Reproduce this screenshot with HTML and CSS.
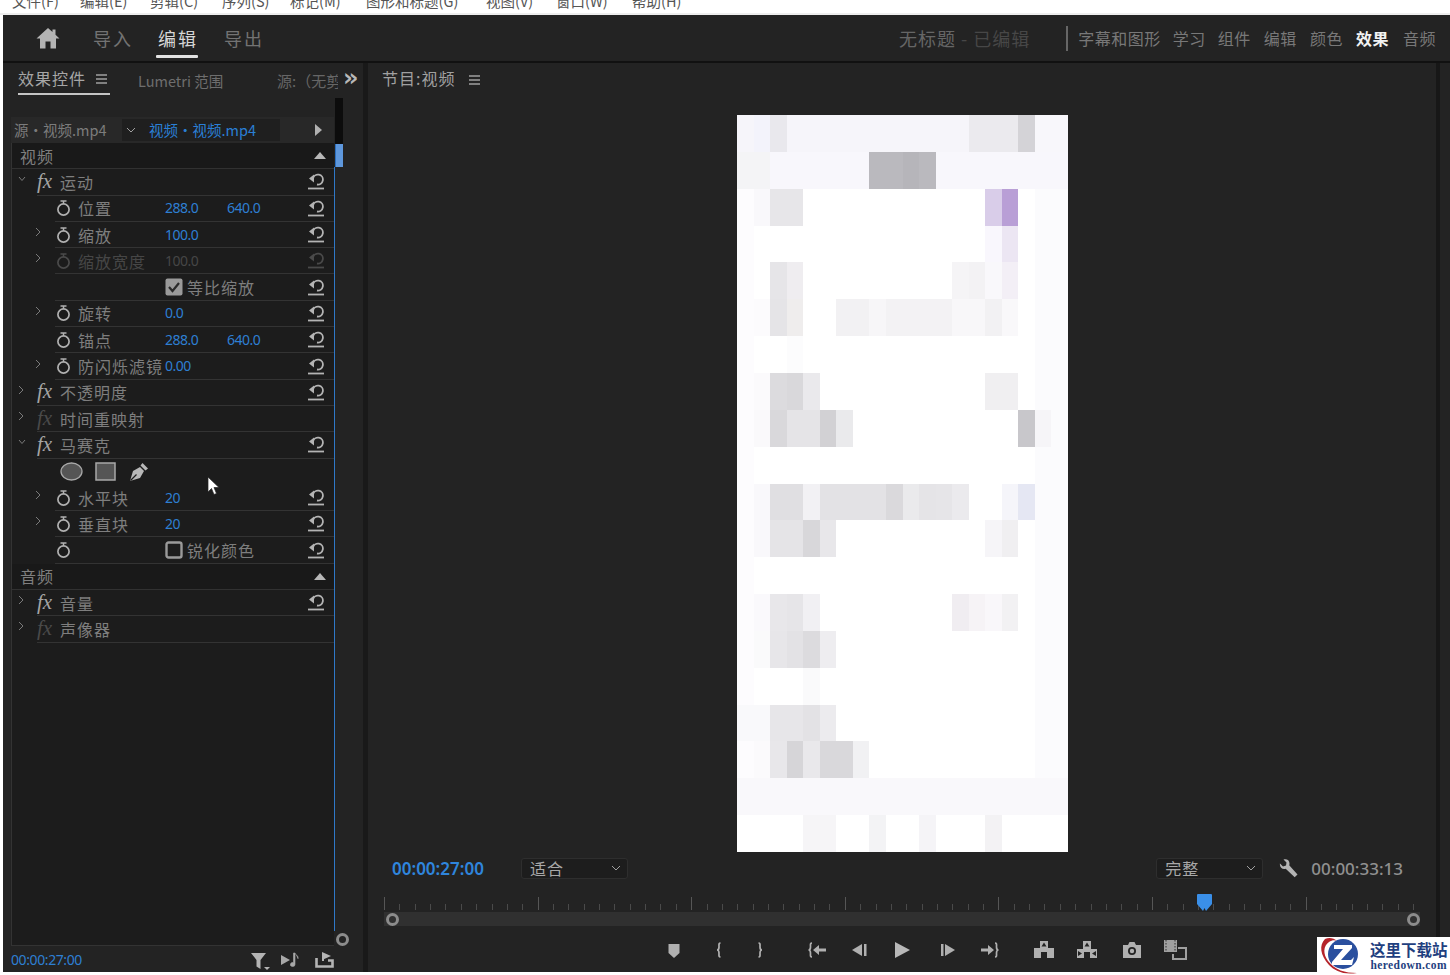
FILE: index.html
```html
<!DOCTYPE html>
<html lang="zh">
<head>
<meta charset="utf-8">
<title>Premiere Pro</title>
<link rel="stylesheet" href="styles.css">
</head>
<body>
<nav class="menubar">
  <span class="m m1">文件(F)</span><span class="m m2">编辑(E)</span><span class="m m3">剪辑(C)</span><span class="m m4">序列(S)</span><span class="m m5">标记(M)</span><span class="m m6">图形和标题(G)</span><span class="m m7">视图(V)</span><span class="m m8">窗口(W)</span><span class="m m9">帮助(H)</span>
</nav>
<div class="app">
  <header class="topbar">
    <svg class="home" viewBox="0 0 24 22"><path d="M12 1 0.5 11.5H4V21.500h5.500V14.500h5V21.500H20V11.500h3.500L19.500 7.800V2.500h-3v2.500z"/></svg>
    <span class="mode mode-import">导入</span>
    <span class="mode mode-active">编辑</span>
    <span class="mode mode-export">导出</span>
    <span class="doc">无标题<em> - 已编辑</em></span>
    <span class="divider"></span>
    <span class="ws ws1">字幕和图形</span><span class="ws ws2">学习</span><span class="ws ws3">组件</span><span class="ws ws4">编辑</span><span class="ws ws5">颜色</span><span class="ws ws6 ws-on">效果</span><span class="ws ws7">音频</span>
  </header>
  <main class="work">
    <section class="left">
      <div class="tabs">
        <div class="tab-active"><span>效果控件</span><svg class="burger" viewBox="0 0 11 10"><path d="M0 1h11M0 5h11M0 9h11"/></svg></div>
        <span class="tab-lum">Lumetri 范围</span>
        <span class="tab-src">源:（无剪辑）</span>
        <span class="more">»</span>
      </div>
      <div class="lbody">
        <div class="lmain">
          <div class="srcbar">
            <span class="src-a">源・视频.mp4</span>
            <div class="src-b">
              <svg class="chev-s" viewBox="0 0 10 6"><path d="M1 1l4 4 4-4"/></svg>
              <span class="src-blue">视频・视频.mp4</span>
            </div>
            <svg class="src-tri" viewBox="0 0 7 12"><path d="M0 0l7 6-7 6z"/></svg>
          </div>
          <div class="list">
            <div class="sec"><span>视频</span><svg class="up" viewBox="0 0 12 7"><path d="M6 0l6 7H0z"/></svg></div>

            <div class="row"><span class="c-fx"><svg class="chev" viewBox="0 0 8 6"><use href="#i-down"/></svg></span><div class="in"><span class="fx">fx</span><span class="name">运动</span><svg class="reset" viewBox="0 0 16 17"><use href="#i-reset"/></svg></div></div>

            <div class="row"><span class="c-pr"></span><div class="in"><svg class="watch" viewBox="0 0 15 16"><use href="#i-watch"/></svg><span class="lab">位置</span><span class="v">288.0</span><span class="v">640.0</span><svg class="reset" viewBox="0 0 16 17"><use href="#i-reset"/></svg></div></div>

            <div class="row"><span class="c-pr"><svg class="chev-r" viewBox="0 0 6 10"><use href="#i-right"/></svg></span><div class="in"><svg class="watch" viewBox="0 0 15 16"><use href="#i-watch"/></svg><span class="lab">缩放</span><span class="v">100.0</span><svg class="reset" viewBox="0 0 16 17"><use href="#i-reset"/></svg></div></div>

            <div class="row off"><span class="c-pr"><svg class="chev-r" viewBox="0 0 6 10"><use href="#i-right"/></svg></span><div class="in"><svg class="watch" viewBox="0 0 15 16"><use href="#i-watch"/></svg><span class="lab">缩放宽度</span><span class="v">100.0</span><svg class="reset" viewBox="0 0 16 17"><use href="#i-reset"/></svg></div></div>

            <div class="row"><span class="c-pr"></span><div class="in"><span class="nowatch"></span><span class="lab"></span><svg class="check" viewBox="0 0 18 18"><rect x="0.500" y="0.500" width="17" height="17" rx="2" fill="#9a9a9a"/><path d="M4 9l3.500 4L14 5" fill="none" stroke="#2a2a2a" stroke-width="2.200"/></svg><span class="ck-lab">等比缩放</span><svg class="reset" viewBox="0 0 16 17"><use href="#i-reset"/></svg></div></div>

            <div class="row"><span class="c-pr"><svg class="chev-r" viewBox="0 0 6 10"><use href="#i-right"/></svg></span><div class="in"><svg class="watch" viewBox="0 0 15 16"><use href="#i-watch"/></svg><span class="lab">旋转</span><span class="v">0.0</span><svg class="reset" viewBox="0 0 16 17"><use href="#i-reset"/></svg></div></div>

            <div class="row"><span class="c-pr"></span><div class="in"><svg class="watch" viewBox="0 0 15 16"><use href="#i-watch"/></svg><span class="lab">锚点</span><span class="v">288.0</span><span class="v">640.0</span><svg class="reset" viewBox="0 0 16 17"><use href="#i-reset"/></svg></div></div>

            <div class="row"><span class="c-pr"><svg class="chev-r" viewBox="0 0 6 10"><use href="#i-right"/></svg></span><div class="in"><svg class="watch" viewBox="0 0 15 16"><use href="#i-watch"/></svg><span class="lab">防闪烁滤镜</span><span class="v">0.00</span><svg class="reset" viewBox="0 0 16 17"><use href="#i-reset"/></svg></div></div>

            <div class="row"><span class="c-fx"><svg class="chev-r" viewBox="0 0 6 10"><use href="#i-right"/></svg></span><div class="in"><span class="fx">fx</span><span class="name">不透明度</span><svg class="reset" viewBox="0 0 16 17"><use href="#i-reset"/></svg></div></div>

            <div class="row"><span class="c-fx"><svg class="chev-r" viewBox="0 0 6 10"><use href="#i-right"/></svg></span><div class="in"><span class="fx fx-off">fx</span><span class="name">时间重映射</span></div></div>

            <div class="row"><span class="c-fx"><svg class="chev" viewBox="0 0 8 6"><use href="#i-down"/></svg></span><div class="in"><span class="fx">fx</span><span class="name">马赛克</span><svg class="reset" viewBox="0 0 16 17"><use href="#i-reset"/></svg></div></div>

            <div class="row"><span class="c-pr"></span><div class="in in-plain">
              <svg class="tool tool-e" viewBox="0 0 23 19"><ellipse cx="11.500" cy="9.500" rx="10.500" ry="8.500" fill="#555" stroke="#a8a8a8" stroke-width="1.300"/></svg>
              <svg class="tool tool-r" viewBox="0 0 21 19"><rect x="1" y="1" width="19" height="17" fill="#555" stroke="#a8a8a8" stroke-width="1.500"/></svg>
              <svg class="tool tool-p" viewBox="0 0 20 20"><path d="M1 19 4 9l7-4 4 4-4 7zM11.500 3.500l2-2.500 5.500 5.500-2.500 2z" fill="#b8b8b8"/><path d="M1.500 18.500 7.500 12.500" stroke="#1d1d1d" stroke-width="1.200"/></svg>
            </div></div>

            <div class="row"><span class="c-pr"><svg class="chev-r" viewBox="0 0 6 10"><use href="#i-right"/></svg></span><div class="in"><svg class="watch" viewBox="0 0 15 16"><use href="#i-watch"/></svg><span class="lab">水平块</span><span class="v">20</span><svg class="reset" viewBox="0 0 16 17"><use href="#i-reset"/></svg></div></div>

            <div class="row"><span class="c-pr"><svg class="chev-r" viewBox="0 0 6 10"><use href="#i-right"/></svg></span><div class="in"><svg class="watch" viewBox="0 0 15 16"><use href="#i-watch"/></svg><span class="lab">垂直块</span><span class="v">20</span><svg class="reset" viewBox="0 0 16 17"><use href="#i-reset"/></svg></div></div>

            <div class="row"><span class="c-pr"></span><div class="in"><svg class="watch" viewBox="0 0 15 16"><use href="#i-watch"/></svg><span class="lab"></span><svg class="check" viewBox="0 0 18 18"><rect x="1.500" y="1.500" width="15" height="15" rx="2" fill="none" stroke="#9a9a9a" stroke-width="2.400"/></svg><span class="ck-lab">锐化颜色</span><svg class="reset" viewBox="0 0 16 17"><use href="#i-reset"/></svg></div></div>

            <div class="sec"><span>音频</span><svg class="up" viewBox="0 0 12 7"><path d="M6 0l6 7H0z"/></svg></div>

            <div class="row"><span class="c-fx"><svg class="chev-r" viewBox="0 0 6 10"><use href="#i-right"/></svg></span><div class="in"><span class="fx">fx</span><span class="name">音量</span><svg class="reset" viewBox="0 0 16 17"><use href="#i-reset"/></svg></div></div>

            <div class="row"><span class="c-fx"><svg class="chev-r" viewBox="0 0 6 10"><use href="#i-right"/></svg></span><div class="in"><span class="fx fx-off">fx</span><span class="name">声像器</span></div></div>
          </div>
        </div>
        <div class="scroll">
          <span class="sb-black"></span>
          <span class="sb-thumb"></span>
          <span class="sb-line"></span>
          <span class="ring"></span>
        </div>
        <svg class="cursor" viewBox="0 0 13 20"><path d="M1 1v15l3.500-3.500 2.500 6 2.500-1-2.500-6h5z" fill="#fff" stroke="#222" stroke-width="0.700"/></svg>
      </div>
      <footer class="lfoot">
        <span class="lfoot-tc">00:00:27:00</span>
        <svg class="ic-filter" viewBox="0 0 19 19"><path d="M0 1h15L9.500 8v9l-4-2.500V8z" fill="#b4b4b4"/><path d="M13 15h6l-3 3z" fill="#b4b4b4"/></svg>
        <svg class="ic-audio" viewBox="0 0 20 16"><path d="M0 3l9 5-9 5z" fill="#a8a8a8"/><path d="M14 1v11.500a2.300 2 0 1 1-1.500-1.900V1h1.500c.5 2 4 3 3 6" fill="#a8a8a8" stroke="#a8a8a8" stroke-width="0.600"/></svg>
        <svg class="ic-export" viewBox="0 0 20 16"><path d="M1.500 6v8.500h16V8.500H13" fill="none" stroke="#b4b4b4" stroke-width="2.600"/><path d="M7 0l9 4-9 4z" fill="#b4b4b4"/><path d="M7 6h2v3H7z" fill="#b4b4b4"/></svg>
      </footer>
    </section>

    <section class="program">
      <div class="ptitle"><span>节目:视频</span><svg class="burger burger-p" viewBox="0 0 11 10"><path d="M0 1h11M0 5h11M0 9h11"/></svg></div>
      <svg class="preview" viewBox="0 0 20 20" preserveAspectRatio="none" shape-rendering="crispEdges" role="img" aria-label="视频预览">
        <rect width="20" height="20" fill="#fff"/>
        <rect y="0" width="20" height="1" fill="#f6f5fa"/><rect x="1" y="0" width="1" height="1" fill="#f3f3fb"/><rect x="2" y="0" width="1" height="1" fill="#e9e8ed"/><rect x="14" y="0" width="3" height="1" fill="#ebeaee"/><rect x="17" y="0" width="1" height="1" fill="#d4d3d7"/><rect x="18" y="0" width="2" height="1" fill="#f8f7fb"/>
        <rect y="1" width="20" height="1" fill="#f8f7fc"/><rect x="0" y="1" width="2" height="1" fill="#f4f4f6"/><rect x="8" y="1" width="4" height="1" fill="#bab9be"/><rect x="10" y="1" width="1" height="1" fill="#b6b5ba"/>
        <rect x="18" y="2" width="2" height="16" fill="#fbfbfd"/><rect x="0" y="2" width="1" height="16" fill="#fdfcfe"/>
        <rect x="1" y="2" width="1" height="1" fill="#f9f8fb"/><rect x="2" y="2" width="2" height="1" fill="#e7e6e9"/><rect x="15" y="2" width="1" height="1" fill="#d9cde9"/><rect x="16" y="2" width="1" height="1" fill="#b99fd6"/>
        <rect x="15" y="3" width="1" height="1" fill="#f9f7fd"/><rect x="16" y="3" width="1" height="1" fill="#ece6f3"/>
        <rect x="2" y="4" width="1" height="1" fill="#e6e5e8"/><rect x="3" y="4" width="1" height="1" fill="#efedf0"/><rect x="13" y="4" width="1" height="1" fill="#f5f4f6"/><rect x="14" y="4" width="1" height="1" fill="#f3f2f4"/><rect x="15" y="4" width="1" height="1" fill="#f9f8fb"/><rect x="16" y="4" width="1" height="1" fill="#f3eff6"/>
        <rect x="1" y="5" width="1" height="1" fill="#fcfbfd"/><rect x="2" y="5" width="1" height="1" fill="#e5e4e7"/><rect x="3" y="5" width="1" height="1" fill="#efeded"/><rect x="6" y="5" width="2" height="1" fill="#f2f1f3"/><rect x="8" y="5" width="1" height="1" fill="#f7f6f8"/><rect x="9" y="5" width="4" height="1" fill="#f3f2f4"/><rect x="13" y="5" width="2" height="1" fill="#f8f7f9"/><rect x="15" y="5" width="1" height="1" fill="#f2f1f3"/><rect x="16" y="5" width="1" height="1" fill="#f9f8fa"/>
        <rect x="3" y="6" width="1" height="1" fill="#fcfcfd"/>
        <rect x="1" y="7" width="1" height="1" fill="#fbfafc"/><rect x="2" y="7" width="1" height="1" fill="#dcdbde"/><rect x="3" y="7" width="1" height="1" fill="#d9d8db"/><rect x="4" y="7" width="1" height="1" fill="#eae9ec"/><rect x="15" y="7" width="2" height="1" fill="#f0eff1"/>
        <rect x="1" y="8" width="1" height="1" fill="#faf9fb"/><rect x="2" y="8" width="1" height="1" fill="#d9d8db"/><rect x="3" y="8" width="2" height="1" fill="#e5e4e7"/><rect x="5" y="8" width="1" height="1" fill="#d2d1d4"/><rect x="6" y="8" width="1" height="1" fill="#eaeaec"/><rect x="17" y="8" width="1" height="1" fill="#c8c7cb"/><rect x="18" y="8" width="1" height="1" fill="#f6f5f8"/>
        <rect x="1" y="10" width="1" height="1" fill="#f9f8fb"/><rect x="2" y="10" width="2" height="1" fill="#e0dfe2"/><rect x="4" y="10" width="1" height="1" fill="#f2f1f4"/><rect x="5" y="10" width="4" height="1" fill="#e3e2e5"/><rect x="9" y="10" width="1" height="1" fill="#dad9dc"/><rect x="10" y="10" width="1" height="1" fill="#eaeaec"/><rect x="11" y="10" width="1" height="1" fill="#e5e4e7"/><rect x="12" y="10" width="1" height="1" fill="#e6e5e8"/><rect x="13" y="10" width="1" height="1" fill="#ebeaed"/><rect x="16" y="10" width="1" height="1" fill="#f5f5fa"/><rect x="17" y="10" width="1" height="1" fill="#e5e7f3"/>
        <rect x="1" y="11" width="1" height="1" fill="#f9f8fb"/><rect x="2" y="11" width="2" height="1" fill="#e5e4e7"/><rect x="4" y="11" width="1" height="1" fill="#d8d7da"/><rect x="5" y="11" width="1" height="1" fill="#e8e7ea"/><rect x="15" y="11" width="1" height="1" fill="#f6f5f8"/><rect x="16" y="11" width="1" height="1" fill="#f0eff1"/>
        <rect x="1" y="13" width="1" height="1" fill="#faf9fc"/><rect x="2" y="13" width="1" height="1" fill="#e8e7ea"/><rect x="3" y="13" width="1" height="1" fill="#e6e5e8"/><rect x="4" y="13" width="1" height="1" fill="#f1f0f3"/><rect x="13" y="13" width="1" height="1" fill="#f0edf1"/><rect x="14" y="13" width="1" height="1" fill="#f6f3f6"/><rect x="15" y="13" width="1" height="1" fill="#f9f7fa"/><rect x="16" y="13" width="1" height="1" fill="#f2f1f3"/>
        <rect x="1" y="14" width="1" height="1" fill="#fafafb"/><rect x="2" y="14" width="1" height="1" fill="#e7e6e9"/><rect x="3" y="14" width="1" height="1" fill="#e3e2e5"/><rect x="4" y="14" width="1" height="1" fill="#dcdbde"/><rect x="5" y="14" width="1" height="1" fill="#eeedf0"/>
        <rect x="4" y="15" width="1" height="1" fill="#fafafb"/>
        <rect x="0" y="16" width="2" height="1" fill="#f9f9fb"/><rect x="2" y="16" width="2" height="1" fill="#e7e6e9"/><rect x="4" y="16" width="1" height="1" fill="#e3e2e5"/><rect x="5" y="16" width="1" height="1" fill="#ecebee"/>
        <rect x="1" y="17" width="1" height="1" fill="#fbfafc"/><rect x="2" y="17" width="1" height="1" fill="#e8e7ea"/><rect x="3" y="17" width="1" height="1" fill="#d6d5d8"/><rect x="4" y="17" width="1" height="1" fill="#e9e8eb"/><rect x="5" y="17" width="2" height="1" fill="#d9d8db"/><rect x="7" y="17" width="1" height="1" fill="#f1f1f3"/>
        <rect x="0" y="18" width="20" height="1" fill="#f9f8fb"/>
        <rect x="4" y="19" width="2" height="1" fill="#f6f5f7"/><rect x="8" y="19" width="1" height="1" fill="#f3f3f5"/><rect x="11" y="19" width="1" height="1" fill="#f5f4f7"/><rect x="15" y="19" width="1" height="1" fill="#f3f2f4"/>
      </svg>
      <div class="ctrl">
        <span class="tc-in">00:00:27:00</span>
        <div class="dd"><span>适合</span><svg class="chev-s" viewBox="0 0 10 6"><path d="M1 1l4 4 4-4"/></svg></div>
        <span class="grow"></span>
        <div class="dd"><span>完整</span><svg class="chev-s" viewBox="0 0 10 6"><path d="M1 1l4 4 4-4"/></svg></div>
        <svg class="wrench" viewBox="0 0 19 19"><path d="M1 4.500 4 7.500 7 6.500 7.500 3.500 4.500 .5C7.500-.5 10.500 1 10.500 4.500c0 .7-.1 1.300-.3 1.800l8.300 9.200-2.800 2.800-9-8.500c-3.500 1-6.500-1.800-5.700-5.800z" fill="#b4b4b4"/></svg>
        <span class="tc-out">00:00:33:13</span>
      </div>
      <div class="ruler">
        <svg class="playhead" viewBox="0 0 15 17"><path d="M1 0h13a1 1 0 0 1 1 1v9l-6 7-1.500-3-1.500 3-6-7V1a1 1 0 0 1 1-1z"/></svg>
      </div>
      <div class="track"><span class="ring ring-a"></span><span class="ring ring-b"></span></div>
      <div class="btns">
        <svg viewBox="0 0 24 24"><path d="M7 6h11v9l-5.500 5L7 15z" fill="#b0b0b0" transform="translate(-0.500 0)"/></svg>
        <svg viewBox="0 0 24 24"><path d="M13.500 5c-2 0-1.500 2-1.500 4s-.5 3-2 3c1.500 0 2 1 2 3s-.5 4 1.500 4" fill="none" stroke="#b0b0b0" stroke-width="1.700"/></svg>
        <svg viewBox="0 0 24 24"><path d="M10.500 5c2 0 1.500 2 1.500 4s.5 3 2 3c-1.500 0-2 1-2 3s.5 4-1.500 4" fill="none" stroke="#b0b0b0" stroke-width="1.700"/></svg>
        <svg viewBox="0 0 24 24"><path d="M7 5C5 5 5.500 7 5.500 9s-.5 3-2 3c1.500 0 2 1 2 3s-.5 4 1.500 4" fill="none" stroke="#b0b0b0" stroke-width="1.700"/><path d="M8 12l6-5v3.500h7v3h-7V17z" fill="#b0b0b0"/></svg>
        <svg viewBox="0 0 24 24"><path d="M15 6v12L5 12z" fill="#b0b0b0"/><path d="M17 6h2.500v12H17z" fill="#b0b0b0"/></svg>
        <svg viewBox="0 0 24 24"><path d="M5 4l15 8-15 8z" fill="#b8b8b8"/></svg>
        <svg viewBox="0 0 24 24"><path d="M9 6v12l10-6z" fill="#b0b0b0"/><path d="M5 6h2.500v12H5z" fill="#b0b0b0"/></svg>
        <svg viewBox="0 0 24 24"><path d="M17 5c2 0 1.500 2 1.500 4s.5 3 2 3c-1.500 0-2 1-2 3s.5 4-1.500 4" fill="none" stroke="#b0b0b0" stroke-width="1.700"/><path d="M16 12l-6-5v3.500H3v3h7V17z" fill="#b0b0b0"/></svg>
        <svg viewBox="0 0 24 24"><path d="M8 3h8v7h6v10h-7v-6H9v6H2V10h6z" fill="#b0b0b0"/><path d="M12 4.500l2.500 4h-5z" fill="#232323"/></svg>
        <svg viewBox="0 0 24 24"><path d="M8 3h8v8h6v9h-7v-6H9v6H2v-9h6z" fill="#b0b0b0"/><path d="M12 4.500l2.500 4h-5zM3 13l4 2.500L3 18zM21 13l-4 2.500 4 2.500z" fill="#232323"/></svg>
        <svg viewBox="0 0 24 24"><path d="M3 7h5l1.500-3h5L16 7h5v13H3z" fill="#b0b0b0"/><circle cx="12" cy="13" r="4" fill="#232323"/><circle cx="12" cy="13" r="2.200" fill="#b0b0b0"/></svg>
        <svg viewBox="0 0 24 24"><path d="M1 2h13v12H1z" fill="#a0a0a0"/><path d="M3 2v12M12 2v12" stroke="#232323" stroke-width="0.900" stroke-dasharray="1.500 1.500"/><path d="M15 10h8v11H10v-5" fill="none" stroke="#a0a0a0" stroke-width="2"/></svg>
      </div>
    </section>
    <div class="strip"></div>
  </main>
</div>

<aside class="wm">
  <svg class="wm-logo" viewBox="0 0 50 38"><path d="M8 2C2 8 3 18 12 28c6 6 14 10 28 8-12 0-22-3-29-12C6 17 6 9 12 5c3-2 6-2 8-1-3-3-8-4-12-2z" fill="#b5242a"/><circle cx="26" cy="17" r="15" fill="#2a4f9e"/><path d="M17 8h18v3L24 23h10l3-3-2 8H15v-3l11-13h-9z" fill="#fff"/></svg>
  <div class="wm-text"><strong>这里下载站</strong><span>heredown.com</span></div>
</aside>

<svg class="defs" width="0" height="0" aria-hidden="true">
  <defs>
    <g id="i-reset"><path d="M4 6.500A5 5 0 1 1 8 12.500" fill="none" stroke="currentColor" stroke-width="1.800" transform="translate(1 -1)"/><path d="M1 5.500 6 1.500v8z" fill="currentColor"/><path d="M0 15.500h16" stroke="currentColor" stroke-width="1.800"/></g>
    <g id="i-watch" fill="none" stroke="currentColor"><circle cx="7.500" cy="9.500" r="5.600" stroke-width="1.700"/><path d="M4.500 1h6M7.500 1v3" stroke-width="1.500"/></g>
    <path id="i-down" d="M1 1l3 3.500L7 1" fill="none" stroke="currentColor" stroke-width="1"/>
    <path id="i-right" d="M1 1l4 4-4 4" fill="none" stroke="currentColor" stroke-width="1"/>
  </defs>
</svg>
</body>
</html>
```

FILE: styles.css
```css
* { box-sizing: border-box; }
html, body { margin: 0; padding: 0; }
body {
  width: 1450px;
  height: 975px;
  overflow: hidden;
  background: #fff;
  position: relative;
  font-family: "Noto Sans CJK SC", "Noto Sans", sans-serif;
  color: #8a8a8a;
}
svg { display: block; flex: none; }
.defs { position: absolute; }

/* menu */
.menubar {
  height: 15px;
  overflow: hidden;
  display: flex;
  background: #fff;
  border-bottom: 2px solid #eee;
  font-size: 14.500px;
  line-height: 16px;
  color: #555;
}
.m { margin-top: -7px; white-space: nowrap; flex: none; }
.m1 { margin-left: 12px; width: 68px; }
.m2 { width: 70px; }
.m3 { width: 72px; }
.m4 { width: 68px; }
.m5 { width: 76px; }
.m6 { width: 120px; }
.m7 { width: 70px; }
.m8 { width: 76px; }
.m9 { width: 60px; }

/* app */
.app {
  height: 957px;
  margin-left: 3px;
  background: #232323;
  display: flex;
  flex-direction: column;
}
.topbar {
  height: 48px;
  flex: none;
  border-bottom: 2px solid #111;
  display: flex;
  align-items: center;
  position: relative;
}
.home { width: 24px; height: 22px; margin-left: 33px; fill: #b4b4b4; }
.mode { font-size: 18px; letter-spacing: 2px; line-height: 24px; color: #737373; white-space: nowrap; }
.mode-import { margin-left: 33px; }
.mode-active { margin-left: 25px; color: #d6d6d6; position: relative; }
.mode-active::after { content: ""; position: absolute; left: -2px; right: 0; top: 29px; height: 3px; background: #e2e2e2; border-radius: 1px; }
.mode-export { margin-left: 26px; }
.doc { margin-left: 635px; font-size: 18px; letter-spacing: 1px; color: #666; white-space: nowrap; }
.doc em { font-style: normal; color: #474747; }
.divider { width: 2px; height: 25px; background: #666; margin-left: 36px; }
.ws { font-size: 16px; color: #787878; white-space: nowrap; letter-spacing: .5px; line-height: 22px; }
.ws1 { margin-left: 10px; }
.ws2, .ws3, .ws4, .ws5, .ws6, .ws7 { margin-left: 12px; }
.ws4, .ws5, .ws6 { margin-left: 13px; }
.ws7 { margin-left: 14px; }
.ws-on { color: #f2f2f2; font-weight: 700; }

.work { flex: 1; min-height: 0; display: flex; }

/* left panel */
.left { width: 360px; flex: none; display: flex; flex-direction: column; }
.tabs { height: 35px; flex: none; display: flex; align-items: flex-start; position: relative; }
.tab-active {
  margin-left: 15px;
  margin-top: 4px;
  width: 92px;
  height: 28px;
  display: flex;
  align-items: flex-start;
  border-bottom: 2px solid #c4c4c4;
  font-size: 16px;
  line-height: 22px;
  letter-spacing: 1px;
  color: #a6a6a6;
  white-space: nowrap;
}
.burger { width: 11px; height: 10px; fill: none; stroke: #a0a0a0; stroke-width: 1.300; margin: 7px 0 0 10px; }
.tab-lum { margin: 8px 0 0 28px; font-size: 14.500px; line-height: 20px; color: #6e6e6e; white-space: nowrap; width: 139px; }
.tab-src { margin-top: 8px; font-size: 15px; line-height: 20px; color: #666; width: 61px; overflow: hidden; white-space: nowrap; flex: none; }
.more { margin: 1px 0 0 5px; font-size: 24px; line-height: 28px; font-family: "DejaVu Sans", sans-serif; font-weight: 700; color: #b8b8b8; }

.lbody { height: 848px; flex: none; display: flex; position: relative; }
.lmain { width: 323px; margin-left: 8px; padding-top: 19px; display: flex; flex-direction: column; flex: none; }
.srcbar { height: 26px; flex: none; display: flex; align-items: center; background: #282828; }
.src-a { margin-left: 3px; width: 108px; font-size: 14.500px; line-height: 20px; color: #7c7c7c; white-space: nowrap; }
.src-b { width: 158px; height: 22px; display: flex; align-items: center; background: #1f1f1f; }
.chev-s { width: 10px; height: 6px; fill: none; stroke: #a0a0a0; stroke-width: 1; }
.src-b .chev-s { margin-left: 4px; }
.src-blue { margin-left: 13px; font-size: 14.500px; line-height: 20px; color: #2a7fd6; white-space: nowrap; }
.src-tri { width: 7px; height: 12px; margin-left: 35px; fill: #b0b0b0; }

.list { flex: 1; background: #1c1c1c; border-left: 1px solid #333; border-bottom: 1px solid #333; color: #7d7d7d; }
.sec {
  height: 26.300px;
  display: flex;
  align-items: center;
  justify-content: space-between;
  padding: 0 8px 0 8px;
  font-size: 16px;
  letter-spacing: 1px;
  color: #7f7f7f;
  background: #191919;
  border-bottom: 1px solid #313131;
}
.up { width: 12px; height: 7px; fill: #b8b8b8; }
.row { height: 26.300px; display: flex; color: #b2b2b2; }
.c-fx { width: 25px; flex: none; display: flex; align-items: center; padding-left: 6px; padding-bottom: 6px; color: #7a7a7a; }
.c-pr { width: 43px; flex: none; display: flex; align-items: center; padding-left: 23px; padding-bottom: 6px; color: #7a7a7a; }
.chev { width: 8px; height: 6px; }
.chev-r { width: 6px; height: 10px; }
.in { flex: 1; min-width: 0; display: flex; align-items: center; border-bottom: 1px solid #333; }
.in-plain { border-bottom: 0; }
.fx { width: 23px; font-family: "Liberation Serif", serif; font-style: italic; font-size: 21px; line-height: 22px; color: #a4a4a4; padding-bottom: 2px; }
.fx-off { color: #4a4a4a; }
.name { font-size: 16px; letter-spacing: 1px; color: #7e7e7e; white-space: nowrap; line-height: 22px; }
.watch { width: 15px; height: 16px; margin-left: 1px; color: #b0b0b0; }
.nowatch { width: 16px; flex: none; }
.lab { width: 87px; margin-left: 7px; flex: none; font-size: 16px; letter-spacing: 1px; color: #7e7e7e; white-space: nowrap; line-height: 22px; }
.v { width: 62px; flex: none; font-family: "Noto Sans", sans-serif; font-size: 14px; letter-spacing: -.5px; color: #2e7fd2; line-height: 20px; }
.reset { width: 16px; height: 17px; margin-left: auto; margin-right: 10px; color: #b4b4b4; }
.off .watch, .off .reset { color: #4a4a4a; }
.off .lab, .off .v { color: #464646; }
.check { width: 18px; height: 18px; }
.ck-lab { margin-left: 4px; font-size: 16px; letter-spacing: 1px; color: #7e7e7e; white-space: nowrap; line-height: 22px; }
.tool { height: 19px; }
.tool-e { width: 23px; margin-left: 5px; }
.tool-r { width: 21px; margin-left: 12px; }
.tool-p { width: 20px; height: 20px; margin-left: 13px; }

.scroll { width: 16px; flex: none; display: flex; flex-direction: column; position: relative; }
.sb-black { width: 8px; height: 46px; background: #0c0c0c; margin-left: 1px; flex: none; }
.sb-thumb { width: 8px; height: 23px; background: #5e97dc; margin-left: 1px; flex: none; border-left: 1px solid #2a6fc0; }
.sb-line { width: 1px; height: 764px; background: #2f78c8; flex: none; }
.ring { width: 13px; height: 13px; border-radius: 50%; border: 3px solid #8c8c8c; flex: none; background: transparent; }
.scroll .ring { margin: 2px 0 0 2px; }
.cursor { position: absolute; left: 204px; top: 378px; width: 13px; height: 20px; }

.lfoot { height: 27px; flex: none; display: flex; align-items: center; border-bottom: 0; }
.lfoot-tc { margin-left: 8px; width: 240px; font-family: "Noto Sans", sans-serif; font-size: 14px; letter-spacing: -.4px; color: #2e7fd2; white-space: nowrap; }
.ic-filter { width: 19px; height: 19px; margin-top: 3px; }
.ic-audio { width: 20px; height: 16px; margin-left: 11px; }
.ic-export { width: 20px; height: 16px; margin-left: 14px; }

/* program */
.program {
  width: 1073px;
  flex: none;
  border-left: 5px solid #191919;
  display: flex;
  flex-direction: column;
}
.ptitle { height: 35px; flex: none; padding: 4px 0 0 14px; display: flex; align-items: flex-start; font-size: 16px; line-height: 22px; letter-spacing: 1px; color: #a0a0a0; }
.burger-p { margin-left: 14px; margin-top: 8px; }
.preview { width: 331px; height: 737px; margin: 17px 0 0 369px; flex: none; }
.ctrl { height: 20px; margin-top: 6px; flex: none; display: flex; align-items: center; padding: 0 33px 0 24px; }
.tc-in { width: 129px; font-family: "Noto Sans", sans-serif; font-weight: 600; font-size: 17px; color: #2f85dc; white-space: nowrap; }
.dd { width: 107px; height: 21px; display: flex; align-items: center; justify-content: space-between; padding: 0 6px 0 8px; background: #1d1d1d; border: 1px solid #2e2e2e; border-radius: 3px; font-size: 16px; letter-spacing: 1px; line-height: 20px; color: #a8a8a8; }
.grow { flex: 1; }
.wrench { width: 19px; height: 19px; margin-left: 16px; }
.tc-out { margin-left: 13px; font-family: "Noto Sans", sans-serif; font-weight: 500; font-size: 17px; color: #909090; white-space: nowrap; }
.ruler {
  position: relative;
  margin: 16px 0 0 16px;
  width: 1031px;
  height: 16px;
  flex: none;
  background-image:
    repeating-linear-gradient(90deg, #565656 0 1px, transparent 1px 153.600px),
    repeating-linear-gradient(90deg, #4a4a4a 0 1px, transparent 1px 15.360px);
  background-size: 100% 13px, 100% 6px;
  background-position: 0 100%, 0 100%;
  background-repeat: no-repeat;
}
.playhead { position: absolute; left: 813px; top: 0; width: 15px; height: 17px; fill: #3a8fe8; }
.track { position: relative; height: 14px; margin: 2px 16px 0 16px; background: #303030; flex: none; }
.track .ring { position: absolute; top: 1px; }
.ring-a { left: 2px; }
.ring-b { right: 0; }
.btns {
  display: grid;
  grid-template-columns: 45px 41px 57px 42px 43px 46px 42px 54px 43px 45px 43px 24px;
  margin: 12px 0 0 294px;
  height: 24px;
  flex: none;
  justify-items: start;
}
.btns svg { width: 24px; height: 24px; }
.strip { width: 4px; flex: none; background: #171717; }

/* watermark */
.wm {
  position: absolute;
  right: 0;
  bottom: 0;
  width: 133px;
  height: 38px;
  background: #fff;
  display: flex;
  align-items: center;
}
.wm-logo { width: 50px; height: 38px; flex: none; }
.wm-text { margin-left: 3px; display: flex; flex-direction: column; align-items: center; line-height: 1; }
.wm-text strong { font-family: "Noto Sans CJK SC", serif; font-weight: 700; font-size: 15.500px; line-height: 19px; color: #1f3f80; white-space: nowrap; }
.wm-text span { font-family: "Liberation Serif", serif; font-weight: 700; font-size: 11.500px; line-height: 13px; color: #1f3f80; letter-spacing: .4px; }
```
